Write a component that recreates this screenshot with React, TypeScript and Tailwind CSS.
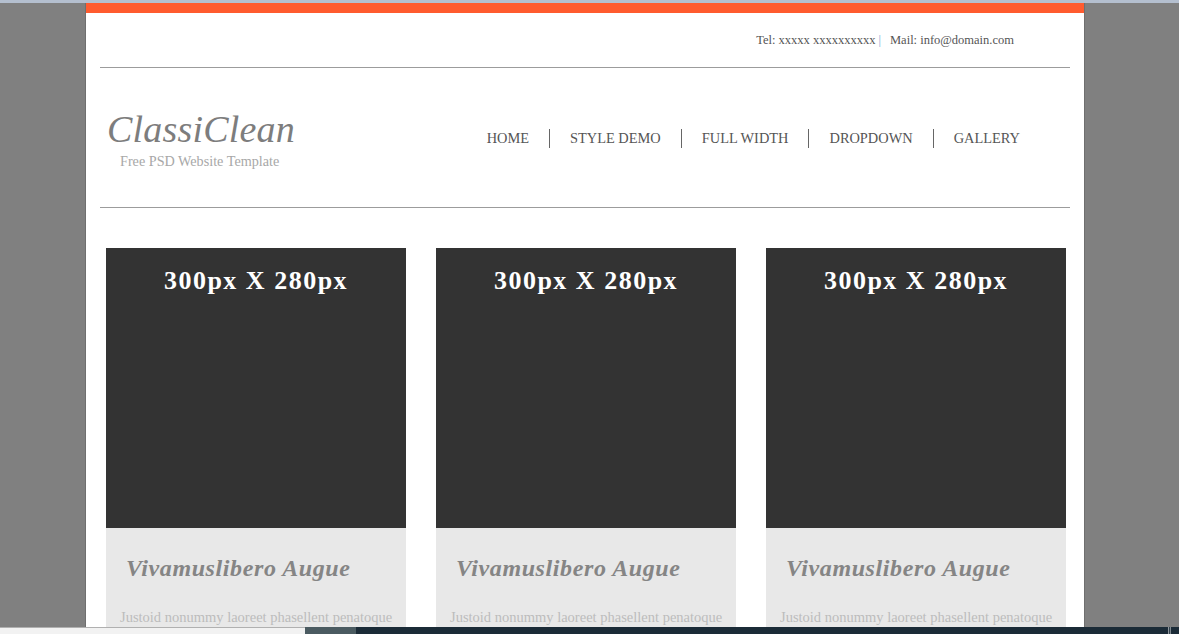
import React from 'react';

const navItems = ['HOME', 'STYLE DEMO', 'FULL WIDTH', 'DROPDOWN', 'GALLERY'];

const cards = [1, 2, 3];

const serif = "font-['Liberation_Serif','DejaVu_Serif',serif]";

const App: React.FC = () => {
  return (
    <div className={`min-h-screen bg-[#808080] border-t-[3px] border-[#b4bfcf] ${serif}`}>
      <div className="ml-[85px] w-[1000px] min-h-[631px] bg-white border-x border-[#6f6f6f]">
        {/* Top bar */}
        <div className="h-[10px] bg-[#ff5b2f]" />

        {/* Contact row */}
        <div className="h-[54px] flex items-center justify-end pr-[70px] pt-[1px] text-[12.5px] text-[#555]">
          <span>Tel: xxxxx xxxxxxxxxx</span>
          <span className="ml-[3px] mr-[9px] text-[#7aa7d6]">|</span>
          <span>Mail: info@domain.com</span>
        </div>
        <div className="mx-[14px] h-px bg-[#9c9c9c]" />

        {/* Header */}
        <div className="h-[139px] flex items-center justify-between pl-[21px] pr-[64px]">
          <div className="mt-[5px]">
            <h1 className="text-[38px] italic text-[#7d7d7d] leading-[44px] tracking-[0.2px]">ClassiClean</h1>
            <p className="ml-[13px] text-[14.2px] text-[#a8a8a8]">Free PSD Website Template</p>
          </div>
          <nav className="flex items-center mt-[2px]">
            {navItems.map((item, i) => (
              <div
                key={item}
                className={`h-[19px] flex items-center text-[14.4px] text-[#555] ${
                  i === 0 ? 'pr-[20px]' : 'px-[20px] border-l border-[#666]'
                } ${i === navItems.length - 1 ? 'pr-0' : ''}`}
              >
                {item}
              </div>
            ))}
          </nav>
        </div>
        <div className="mx-[14px] h-px bg-[#9c9c9c]" />

        {/* Cards */}
        <div className="flex gap-[30px] pl-[20px] pt-[40px]">
          {cards.map((c) => (
            <div key={c} className="w-[300px] shrink-0">
              <div className="h-[280px] bg-[#333] pt-[13px] text-center">
                <span className="text-[26px] font-bold tracking-[1.5px] text-white">300px X 280px</span>
              </div>
              <div className="bg-[#e8e8e8] px-[20px] pt-[22px] pb-[20px]">
                <h2 className="text-[24px] font-bold italic tracking-[0.6px] text-[#858585]">Vivamuslibero Augue</h2>
                <p className="mt-[21px] -ml-[6px] -mr-[12px] text-[14.5px] leading-[20px] text-[#bcbcbc]">
                  Justoid nonummy laoreet phasellent penatoque lorem ipsum dolor sit amet consectetur
                </p>
              </div>
            </div>
          ))}
        </div>
      </div>

      {/* Taskbar overlay */}
      <div className="fixed bottom-0 left-0 right-0 h-[7px] flex">
        <div className="w-[305px] bg-[#f2f2f2] border-t border-[#b0b0b0]" />
        <div className="w-[51px] bg-[#4b5b61]" />
        <div className="flex-1 bg-[#1b2b37] flex justify-end pr-[8px]">
          <span className="text-[9px] leading-[7px] text-white">||</span>
        </div>
      </div>
    </div>
  );
};

export default App;
